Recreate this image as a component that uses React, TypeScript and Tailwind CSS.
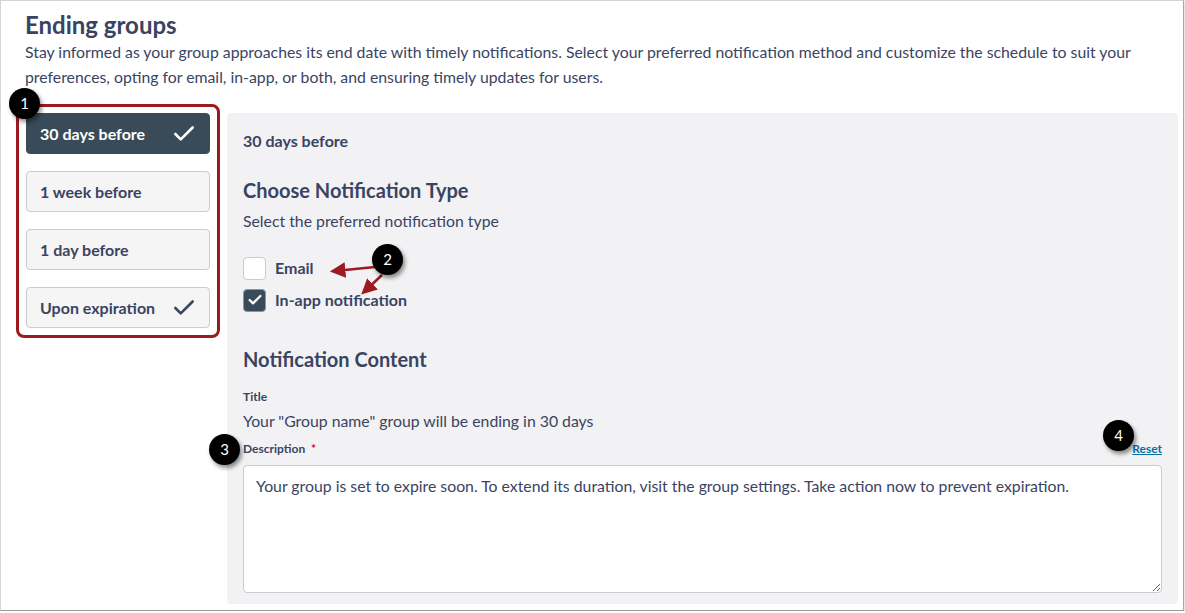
import { Check } from 'lucide-react'

const ink = 'text-[#3a4462]'

const options = [
  { label: '30 days before', active: true, done: true },
  { label: '1 week before', active: false, done: false },
  { label: '1 day before', active: false, done: false },
  { label: 'Upon expiration', active: false, done: true },
]

function Marker({ n, className }: { n: number; className: string }) {
  return (
    <div
      className={`absolute flex h-[31px] w-[31px] items-center justify-center rounded-full bg-black text-[15px] text-white shadow-[2px_3px_4px_rgba(0,0,0,0.45)] ${className}`}
    >
      {n}
    </div>
  )
}

export default function App() {
  return (
    <div
      className="relative h-[611px] w-[1184px] overflow-hidden border border-[#d4d4d4] border-b-[#9a9a9a] border-r-[#a8a8a8] bg-white shadow-[0_1px_2px_rgba(0,0,0,0.3)]"
      style={{ fontFamily: 'Lato, "Noto Sans", sans-serif' }}
    >
      <div className={`px-[24px] pt-[8px] ${ink}`}>
        <h1 className="text-[24px] font-bold leading-[32px]">Ending groups</h1>
        <p className="mt-[-2px] w-[1120px] text-[15.8px] leading-[25px]">
          Stay informed as your group approaches its end date with timely notifications. Select your preferred notification method and customize the schedule to suit your preferences, opting for email, in-app, or both, and ensuring timely updates for users.
        </p>
      </div>

      <div className="mt-[15px] flex items-start pl-[15px]">
        {/* schedule list */}
        <div className="flex w-[204px] flex-col gap-[17px] rounded-[8px] border-[3px] border-[#9c1b20] px-[7px] pb-[7px] pt-[6px]">
          {options.map((o) => (
            <div
              key={o.label}
              className={`flex h-[41px] items-center justify-between rounded-[4px] border pl-[13px] pr-[12px] text-[16px] font-bold ${
                o.active
                  ? 'border-[#394b58] bg-[#394b58] text-white'
                  : `border-[#c7cdd1] bg-[#f5f5f5] ${ink}`
              }`}
            >
              <span>{o.label}</span>
              {o.done && <Check size={26} strokeWidth={2.4} />}
            </div>
          ))}
        </div>

        {/* settings panel */}
        <div className={`ml-[7px] mt-[9px] w-[951px] rounded-[4px] bg-[#f2f2f4] px-[16px] pb-[11px] pt-[16px] ${ink}`}>
          <div className="text-[16px] font-bold leading-[24px]">30 days before</div>
          <h2 className="mt-[23px] text-[20px] font-bold leading-[28px]">Choose Notification Type</h2>
          <p className="mt-[5px] text-[15.8px] leading-[24px]">Select the preferred notification type</p>

          <div className="mt-[23px] flex h-[24px] items-center gap-[9px]">
            <span className="h-[23px] w-[23px] rounded-[4px] border border-[#c7cdd1] bg-white" />
            <span className="text-[16px] font-bold">Email</span>
          </div>
          <div className="mt-[8px] flex h-[24px] items-center gap-[9px]">
            <span className="flex h-[23px] w-[23px] items-center justify-center rounded-[4px] border border-[#8b96a0] bg-[#394b58] text-white">
              <Check size={16} strokeWidth={3.5} />
            </span>
            <span className="text-[16px] font-bold">In-app notification</span>
          </div>

          <h2 className="mt-[33px] text-[20px] font-bold leading-[28px]">Notification Content</h2>
          <div className="mt-[16px] text-[12px] font-bold leading-[16px]">Title</div>
          <div className="mt-[4px] text-[15.8px] leading-[24px]">Your "Group name" group will be ending in 30 days</div>

          <div className="mt-[8px] flex items-center justify-between text-[12px] font-bold leading-[16px]">
            <span>
              Description <span className="ml-[3px] text-[#e0061f]">*</span>
            </span>
            <a className="text-[#0770a3] underline">Reset</a>
          </div>
          <textarea
            readOnly
            defaultValue="Your group is set to expire soon. To extend its duration, visit the group settings. Take action now to prevent expiration."
            className={`mt-[8px] block h-[128px] w-full rounded-[4px] border border-[#c7cdd1] bg-white px-[12px] pt-[8px] text-[15.8px] leading-[24px] outline-none ${ink}`}
          />
        </div>
      </div>

      {/* annotation arrows */}
      <svg className="pointer-events-none absolute left-0 top-0" width="1184" height="611">
        <defs>
          <marker id="head" markerWidth="6" markerHeight="6" refX="4" refY="3" orient="auto" markerUnits="strokeWidth">
            <path d="M0,0 L6,3 L0,6 Z" fill="#9c1b20" />
          </marker>
        </defs>
        <line x1="374" y1="266" x2="334" y2="270" stroke="#9c1b20" strokeWidth="2.6" markerEnd="url(#head)" />
        <line x1="381" y1="274" x2="364" y2="290" stroke="#9c1b20" strokeWidth="2.6" markerEnd="url(#head)" />
      </svg>

      <Marker n={1} className="left-[8px] top-[87px]" />
      <Marker n={2} className="left-[371px] top-[243px]" />
      <Marker n={3} className="left-[208px] top-[433px]" />
      <Marker n={4} className="left-[1102px] top-[419px]" />
    </div>
  )
}
